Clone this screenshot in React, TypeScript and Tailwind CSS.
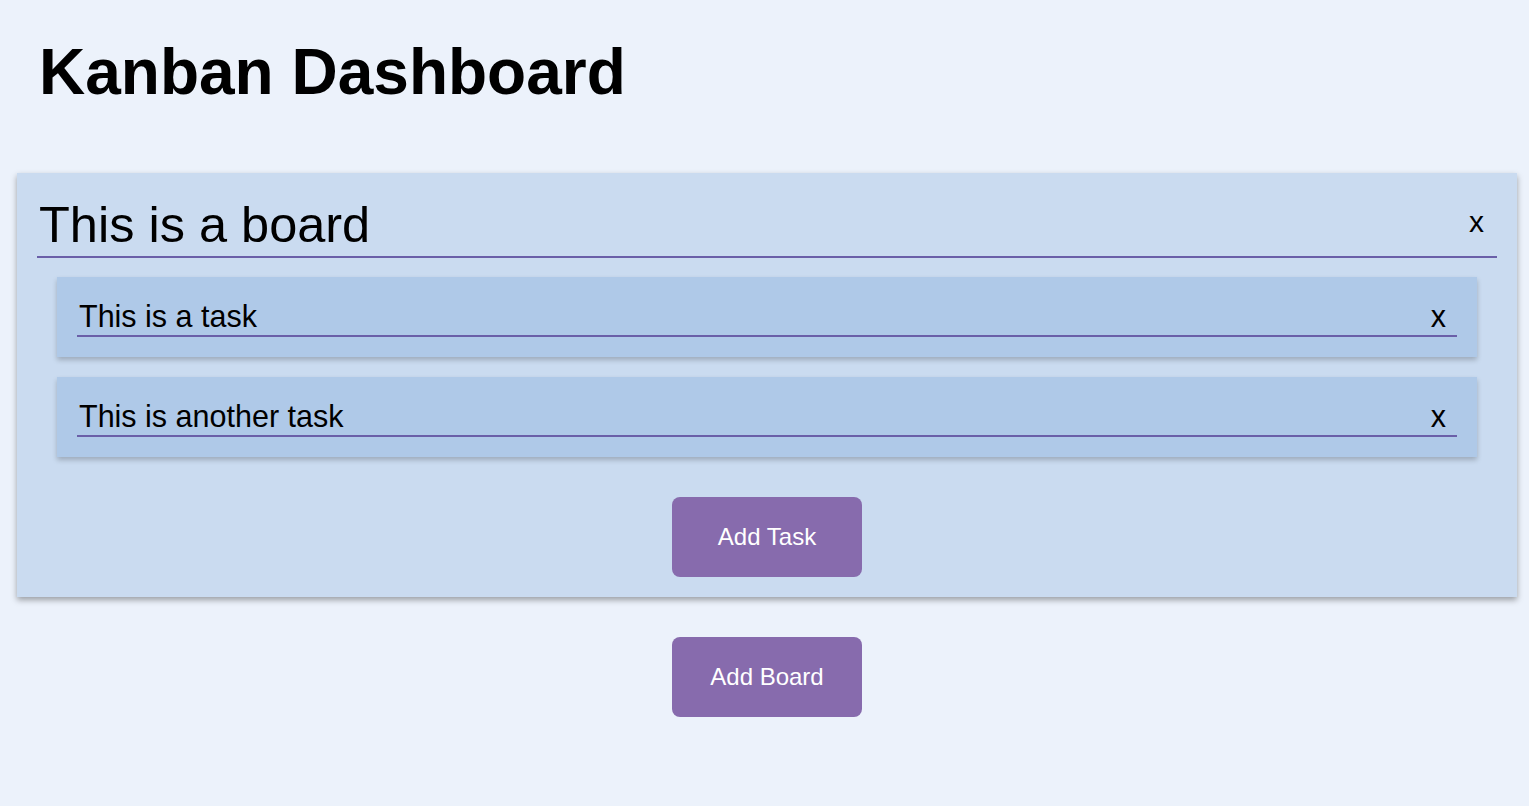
import React from "react";

const font = { fontFamily: '"Liberation Sans", Arial, sans-serif' };

function Task({ text }: { text: string }) {
  return (
    <div className="mx-5 bg-[#afc9e8] p-5 shadow-[0_3px_5px_rgba(0,0,0,0.22)]">
      <div className="flex h-[40px] items-start justify-between border-b-2 border-[#6a5fa8] pl-[2px] pr-[11px] text-[30.5px] leading-[38px] text-black">
        <span>{text}</span>
        <span>x</span>
      </div>
    </div>
  );
}

export default function App() {
  return (
    <div className="min-h-[806px] w-full bg-[#ecf2fb] pt-[40px] pb-10" style={font}>
      <h1 className="ml-[39px] text-[64px] font-bold leading-[64px] text-black">Kanban Dashboard</h1>
      <div className="ml-[17px] mr-[12px] mt-[69px] flex flex-col">
        <div className="bg-[#cadbf0] p-5 shadow-[0_3px_6px_rgba(0,0,0,0.35)]">
          <div className="flex h-[65px] items-start justify-between border-b-2 border-[#6a5fa8] pl-[2px] pr-[13px]">
            <span className="text-[50.5px] leading-[63px] text-black">This is a board</span>
            <span className="mt-[14px] text-[30px] leading-[30px] text-black">x</span>
          </div>
          <div className="mt-[19px] flex flex-col gap-5">
            <Task text="This is a task" />
            <Task text="This is another task" />
          </div>
          <div className="mt-10 flex justify-center">
            <button className="h-[80px] w-[190px] rounded-lg bg-[#876bad] text-[24px] text-white">Add Task</button>
          </div>
        </div>
        <div className="mt-10 flex justify-center">
          <button className="h-[80px] w-[190px] rounded-lg bg-[#876bad] text-[24px] text-white">Add Board</button>
        </div>
      </div>
    </div>
  );
}
